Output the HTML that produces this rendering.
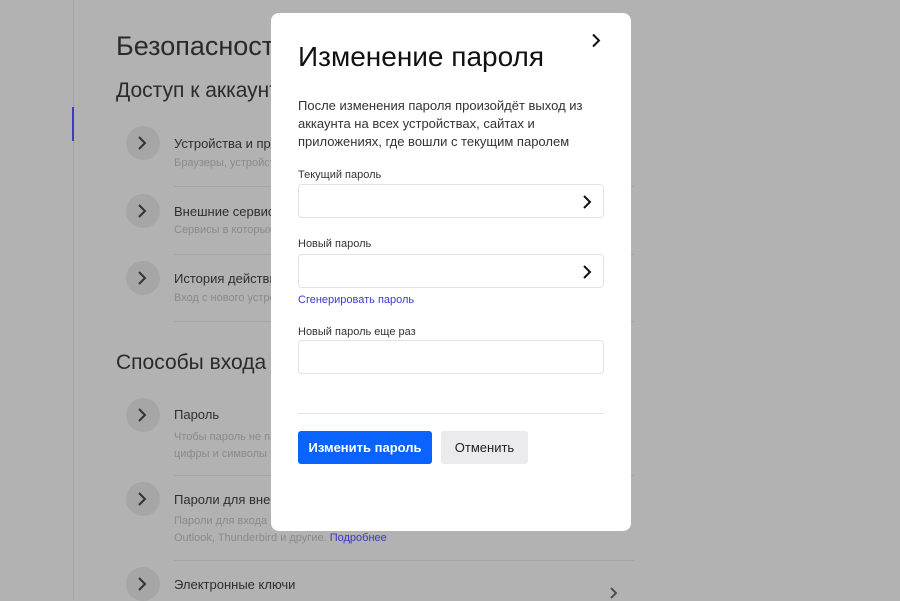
<!DOCTYPE html>
<html><head><meta charset="utf-8"><style>
*{margin:0;padding:0;box-sizing:border-box}
body{width:900px;height:600px;overflow:hidden;background:#b2b2b2;font-family:"Liberation Sans","DejaVu Sans",sans-serif;position:relative}
.a{position:absolute}
.vl{left:73px;top:0;width:1px;height:600px;background:#a6a6a6}
.bar{left:72px;top:107px;width:2px;height:34px;background:#3a3ad0}
.h1{left:116px;top:31px;font-size:27px;color:#2a2a2a}
.h2{left:116px;top:79px;font-size:21px;color:#2a2a2a}
.circ{width:34px;height:34px;border-radius:50%;background:#a6a6a6}
.circ svg{position:absolute;left:11px;top:10px}
.t{font-size:13px;color:#2e2e2e}
.s{font-size:11px;color:#8a8a8a}
.hr{height:1px;background:#a5a5a5;width:460px;left:174px}
.modal{left:271px;top:13px;width:360px;height:518px;background:#fff;border-radius:8px}
.m{position:absolute}
.lbl{font-size:11px;color:#333}
.inp{left:27px;width:306px;height:34px;border:1px solid #e2e2e2;border-radius:4px}
.inp svg{position:absolute;right:11px;top:10px}
</style></head><body>
<div class="a vl"></div><div class="a bar"></div>
<div class="a h1">Безопасность</div>
<div class="a h2">Доступ к аккаунту</div>
<div class="a circ" style="left:126px;top:126px"><svg width="10" height="14" viewBox="0 0 10 14"><path d="M2 1l6 6-6 6" stroke="#333" stroke-width="2" fill="none"/></svg></div>
<div class="a t" style="left:174px;top:136px">Устройства и приложения</div>
<div class="a s" style="left:174px;top:157px">Браузеры, устройства</div>
<div class="a hr" style="top:186px"></div>
<div class="a circ" style="left:126px;top:194px"><svg width="10" height="14" viewBox="0 0 10 14"><path d="M2 1l6 6-6 6" stroke="#333" stroke-width="2" fill="none"/></svg></div>
<div class="a t" style="left:174px;top:204px">Внешние сервисы</div>
<div class="a s" style="left:174px;top:224px">Сервисы в которых</div>
<div class="a hr" style="top:254px"></div>
<div class="a circ" style="left:126px;top:261px"><svg width="10" height="14" viewBox="0 0 10 14"><path d="M2 1l6 6-6 6" stroke="#333" stroke-width="2" fill="none"/></svg></div>
<div class="a t" style="left:174px;top:271px">История действий</div>
<div class="a s" style="left:174px;top:292px">Вход с нового устройства</div>
<div class="a hr" style="top:321px"></div>
<div class="a h2" style="top:351px">Способы входа</div>
<div class="a circ" style="left:126px;top:398px"><svg width="10" height="14" viewBox="0 0 10 14"><path d="M2 1l6 6-6 6" stroke="#333" stroke-width="2" fill="none"/></svg></div>
<div class="a t" style="left:174px;top:407px">Пароль</div>
<div class="a s" style="left:174px;top:429px;line-height:17px">Чтобы пароль не п<br>цифры и символы</div>
<div class="a hr" style="top:475px"></div>
<div class="a circ" style="left:126px;top:482px"><svg width="10" height="14" viewBox="0 0 10 14"><path d="M2 1l6 6-6 6" stroke="#333" stroke-width="2" fill="none"/></svg></div>
<div class="a t" style="left:174px;top:492px">Пароли для внешних</div>
<div class="a s" style="left:174px;top:513px;line-height:17px">Пароли для входа<br>Outlook, Thunderbird и другие. <span style="color:#3a3ac0">Подробнее</span></div>
<div class="a hr" style="top:560px"></div>
<div class="a circ" style="left:126px;top:567px"><svg width="10" height="14" viewBox="0 0 10 14"><path d="M2 1l6 6-6 6" stroke="#333" stroke-width="2" fill="none"/></svg></div>
<div class="a t" style="left:174px;top:577px">Электронные ключи</div>
<svg class="a" style="left:610px;top:587px" width="8" height="12" viewBox="0 0 8 12"><path d="M1 1l5 5-5 5" stroke="#444" stroke-width="1.8" fill="none"/></svg>

<div class="a modal">
<svg class="m" style="left:320px;top:20px" width="10" height="15" viewBox="0 0 10 15"><path d="M2 1.5l6 6-6 6" stroke="#111" stroke-width="2" fill="none"/></svg>
<div class="m" style="left:27px;top:28px;font-size:28px;color:#111">Изменение пароля</div>
<div class="m" style="left:27px;top:84px;font-size:13px;line-height:18px;color:#333;width:310px">После изменения пароля произойдёт выход из аккаунта на всех устройствах, сайтах и приложениях, где вошли с текущим паролем</div>
<div class="m lbl" style="left:27px;top:156px">Текущий пароль</div>
<div class="m inp" style="top:171px"><svg width="10" height="14" viewBox="0 0 10 14"><path d="M2 1l6 6-6 6" stroke="#111" stroke-width="2" fill="none"/></svg></div>
<div class="m lbl" style="left:27px;top:225px">Новый пароль</div>
<div class="m inp" style="top:241px"><svg width="10" height="14" viewBox="0 0 10 14"><path d="M2 1l6 6-6 6" stroke="#111" stroke-width="2" fill="none"/></svg></div>
<div class="m" style="left:27px;top:281px;font-size:11px;color:#3a3ad0">Сгенерировать пароль</div>
<div class="m lbl" style="left:27px;top:313px">Новый пароль еще раз</div>
<div class="m inp" style="top:327px"></div>
<div class="m" style="left:27px;top:400px;width:306px;height:1px;background:#e2e2e2"></div>
<div class="m" style="left:27px;top:418px;width:134px;height:33px;background:#0a62ff;border-radius:3px;color:#fff;font-size:13px;font-weight:bold;line-height:33px;text-align:center">Изменить пароль</div>
<div class="m" style="left:170px;top:418px;width:87px;height:33px;background:#ebebed;border-radius:3px;color:#222;font-size:13px;line-height:33px;text-align:center">Отменить</div>
</div>
</body></html>
